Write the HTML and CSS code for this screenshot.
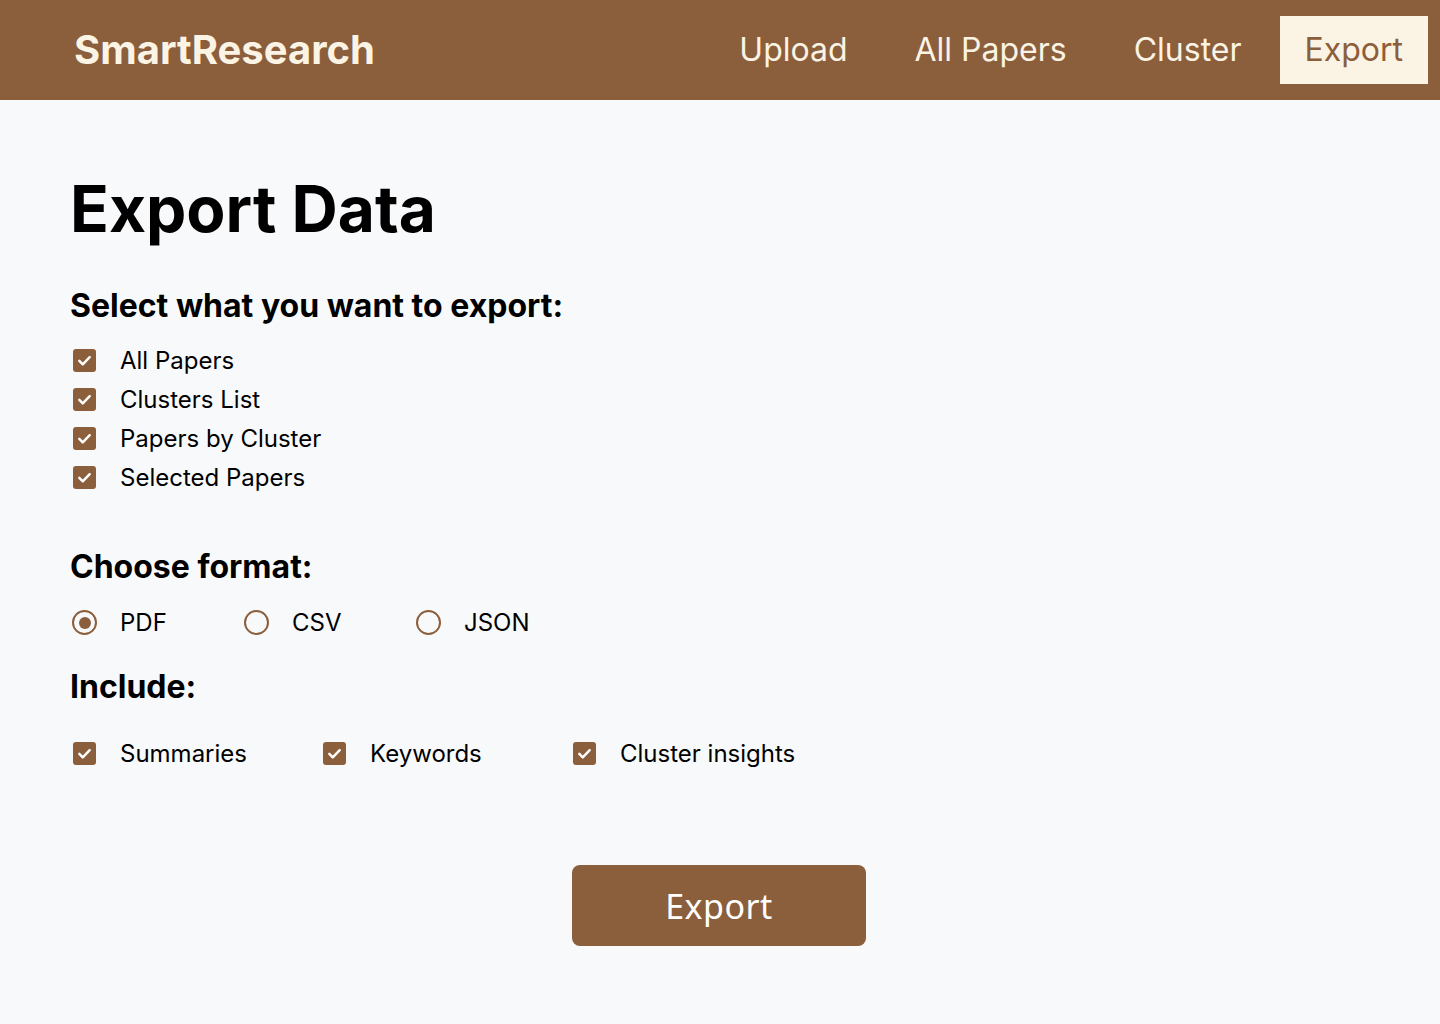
FILE: index.html
```html
<!DOCTYPE html>
<html lang="en">
<head>
<meta charset="utf-8">
<title>SmartResearch – Export Data</title>
<link rel="stylesheet" href="styles.css">
</head>
<body>
<header class="topbar">
  <div class="logo">SmartResearch</div>
  <nav class="nav">
    <a class="nav-item" href="#">Upload</a>
    <a class="nav-item" href="#">All Papers</a>
    <a class="nav-item" href="#">Cluster</a>
    <a class="nav-item active" href="#">Export</a>
  </nav>
</header>
<main class="content">
  <h1 class="title">Export Data</h1>

  <h2 class="section first">Select what you want to export:</h2>
  <div class="check-list">
    <label class="opt"><span class="box"><svg viewBox="0 0 24 24"><path d="M6.6 12.4l3.6 3.6 7.2-7.4"/></svg></span>All Papers</label>
    <label class="opt"><span class="box"><svg viewBox="0 0 24 24"><path d="M6.6 12.4l3.6 3.6 7.2-7.4"/></svg></span>Clusters List</label>
    <label class="opt"><span class="box"><svg viewBox="0 0 24 24"><path d="M6.6 12.4l3.6 3.6 7.2-7.4"/></svg></span>Papers by Cluster</label>
    <label class="opt"><span class="box"><svg viewBox="0 0 24 24"><path d="M6.6 12.4l3.6 3.6 7.2-7.4"/></svg></span>Selected Papers</label>
  </div>

  <h2 class="section format">Choose format:</h2>
  <div class="radio-row">
    <label class="opt"><span class="radio checked"></span>PDF</label>
    <label class="opt"><span class="radio"></span>CSV</label>
    <label class="opt"><span class="radio"></span>JSON</label>
  </div>

  <h2 class="section include">Include:</h2>
  <div class="include-row">
    <label class="opt"><span class="box"><svg viewBox="0 0 24 24"><path d="M6.6 12.4l3.6 3.6 7.2-7.4"/></svg></span>Summaries</label>
    <label class="opt"><span class="box"><svg viewBox="0 0 24 24"><path d="M6.6 12.4l3.6 3.6 7.2-7.4"/></svg></span>Keywords</label>
    <label class="opt"><span class="box"><svg viewBox="0 0 24 24"><path d="M6.6 12.4l3.6 3.6 7.2-7.4"/></svg></span>Cluster insights</label>
  </div>

  <div class="actions">
    <button class="export-btn" type="button">Export</button>
  </div>
</main>
</body>
</html>
```
FILE: styles.css
```css
* { box-sizing: border-box; }

html, body {
  margin: 0;
  padding: 0;
}

body {
  background: #f8f9fb;
  font-family: Inter, "Noto Sans", sans-serif;
  color: #000;
  min-height: 1024px;
}

.topbar {
  height: 100px;
  background: #8b5e3c;
  display: flex;
  align-items: center;
  justify-content: space-between;
  padding: 0 12px 0 74px;
}

.logo {
  font-size: 40px;
  font-weight: 700;
  color: #fbf3e3;
  line-height: 48px;
}

.nav {
  display: flex;
  align-items: center;
  gap: 17px;
}

.nav-item {
  font-size: 32px;
  line-height: 38px;
  padding: 15px 25px;
  color: #fbf3e3;
  text-decoration: none;
}

.nav-item.active {
  margin-left: -4px;
  background: #fbf3e3;
  color: #8b5e3c;
}

.content {
  padding: 73px 70px 0;
}

.title {
  margin: 0;
  font-size: 64px;
  font-weight: 700;
  line-height: 72px;
}

.section {
  margin: 0;
  font-size: 32px;
  font-weight: 700;
  line-height: 36px;
}

.section.first { margin-top: 43px; }
.section.format { margin-top: 52px; }
.section.include { margin-top: 27px; }

.opt {
  display: flex;
  align-items: center;
  height: 39px;
  font-size: 24px;
  gap: 24px;
  padding-left: 3px;
}

.check-list {
  margin-top: 17px;
  display: flex;
  flex-direction: column;
}

.box {
  width: 23px;
  height: 23px;
  border-radius: 3px;
  background: #8b5e3c;
  display: flex;
  align-items: center;
  justify-content: center;
  flex: none;
}

.box svg {
  width: 23px;
  height: 23px;
  fill: none;
  stroke: #fff;
  stroke-width: 2.6;
  stroke-linecap: round;
  stroke-linejoin: round;
}

.radio-row {
  margin-top: 18px;
  display: grid;
  grid-template-columns: repeat(3, 172px);
}

.radio-row .opt {
  padding-left: 2px;
  gap: 23px;
}

.radio {
  width: 25px;
  height: 25px;
  border-radius: 50%;
  border: 2.5px solid #8b5e3c;
  flex: none;
  display: flex;
  align-items: center;
  justify-content: center;
}

.radio.checked::after {
  content: "";
  width: 12px;
  height: 12px;
  border-radius: 50%;
  background: #8b5e3c;
}

.include-row {
  margin-top: 29px;
  display: grid;
  grid-template-columns: repeat(3, 250px);
}

.actions {
  display: flex;
  justify-content: center;
  margin-top: 92px;
  padding-right: 2px;
}

.export-btn {
  width: 294px;
  height: 81px;
  border: none;
  border-radius: 8px;
  background: #8b5e3c;
  color: #fff;
  font-family: "Noto Sans", "Open Sans", sans-serif;
  font-size: 34px;
  letter-spacing: 0.5px;
  cursor: pointer;
}
```
